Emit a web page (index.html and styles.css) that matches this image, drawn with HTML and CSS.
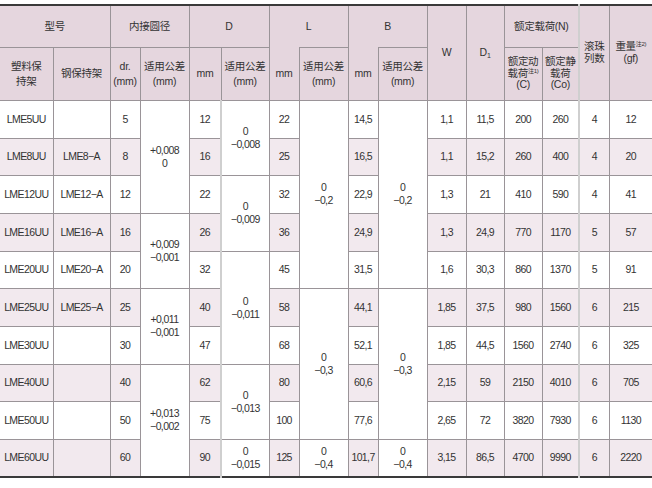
FILE: index.html
```html
<!DOCTYPE html>
<html lang="zh">
<head>
<meta charset="utf-8">
<title>LME 规格表</title>
<link rel="stylesheet" href="styles.css">
</head>
<body>
<table class="spec">
  <colgroup>
    <col style="width:53px"><col style="width:57px"><col style="width:30px"><col style="width:49px">
    <col style="width:32px"><col style="width:48px"><col style="width:30px"><col style="width:49px">
    <col style="width:30px"><col style="width:49px"><col style="width:39px"><col style="width:38px">
    <col style="width:38px"><col style="width:37px"><col style="width:30px"><col style="width:43px">
  </colgroup>
  <thead>
    <tr class="h1">
      <th colspan="2">型号</th>
      <th colspan="2">内接圆径</th>
      <th colspan="2">D</th>
      <th colspan="2" class="nob">L</th>
      <th colspan="2" class="nob">B</th>
      <th rowspan="2">W</th>
      <th rowspan="2">D<sub>1</sub></th>
      <th colspan="2">额定载荷(N)</th>
      <th rowspan="2" class="soft tight">滚珠<br>列数</th>
      <th rowspan="2" class="tight">重量<sup>注2)</sup><br>(gf)</th>
    </tr>
    <tr class="h2">
      <th>塑料保<br>持架</th>
      <th>钢保持架</th>
      <th>dr.<br>(mm)</th>
      <th>适用公差<br>(mm)</th>
      <th>mm</th>
      <th>适用公差<br>(mm)</th>
      <th>mm</th>
      <th class="bt">适用公差<br>(mm)</th>
      <th>mm</th>
      <th class="bt">适用公差<br>(mm)</th>
      <th class="tight">额定动<br>载荷<sup>注1)</sup><br>(C)</th>
      <th class="tight">额定静<br>载荷<br>(Co)</th>
    </tr>
  </thead>
  <tbody>
    <tr class="r38">
      <td>LME5UU</td><td></td><td>5</td>
      <td rowspan="3" class="m">+0,008<br>0</td>
      <td>12</td>
      <td rowspan="2" class="m soft">0<br>−0,008</td>
      <td>22</td>
      <td rowspan="5" class="m">0<br>−0,2</td>
      <td>14,5</td>
      <td rowspan="5" class="m">0<br>−0,2</td>
      <td>1,1</td><td>11,5</td><td>200</td><td>260</td><td class="soft">4</td><td>12</td>
    </tr>
    <tr class="alt r37">
      <td>LME8UU</td><td>LME8−A</td><td>8</td>
      <td>16</td><td>25</td><td>16,5</td>
      <td>1,1</td><td>15,2</td><td>260</td><td>400</td><td class="soft">4</td><td>20</td>
    </tr>
    <tr class="r38">
      <td>LME12UU</td><td>LME12−A</td><td>12</td>
      <td>22</td>
      <td rowspan="2" class="m soft">0<br>−0,009</td>
      <td>32</td><td>22,9</td>
      <td>1,3</td><td>21</td><td>410</td><td>590</td><td class="soft">4</td><td>41</td>
    </tr>
    <tr class="alt r38">
      <td>LME16UU</td><td>LME16−A</td><td>16</td>
      <td rowspan="2" class="m">+0,009<br>−0,001</td>
      <td>26</td><td>36</td><td>24,9</td>
      <td>1,3</td><td>24,9</td><td>770</td><td>1170</td><td class="soft">5</td><td>57</td>
    </tr>
    <tr class="r37">
      <td>LME20UU</td><td>LME20−A</td><td>20</td>
      <td>32</td>
      <td rowspan="3" class="m soft">0<br>−0,011</td>
      <td>45</td><td>31,5</td>
      <td>1,6</td><td>30,3</td><td>860</td><td>1370</td><td class="soft">5</td><td>91</td>
    </tr>
    <tr class="alt r38">
      <td>LME25UU</td><td>LME25−A</td><td>25</td>
      <td rowspan="2" class="m">+0,011<br>−0,001</td>
      <td>40</td><td>58</td>
      <td rowspan="4" class="m">0<br>−0,3</td>
      <td>44,1</td>
      <td rowspan="4" class="m">0<br>−0,3</td>
      <td>1,85</td><td>37,5</td><td>980</td><td>1560</td><td class="soft">6</td><td>215</td>
    </tr>
    <tr class="r38">
      <td>LME30UU</td><td></td><td>30</td>
      <td>47</td><td>68</td><td>52,1</td>
      <td>1,85</td><td>44,5</td><td>1560</td><td>2740</td><td class="soft">6</td><td>325</td>
    </tr>
    <tr class="alt r37">
      <td>LME40UU</td><td></td><td>40</td>
      <td rowspan="3" class="m">+0,013<br>−0,002</td>
      <td>62</td>
      <td rowspan="2" class="m soft">0<br>−0,013</td>
      <td>80</td><td>60,6</td>
      <td>2,15</td><td>59</td><td>2150</td><td>4010</td><td class="soft">6</td><td>705</td>
    </tr>
    <tr class="r38">
      <td>LME50UU</td><td></td><td>50</td>
      <td>75</td><td>100</td><td>77,6</td>
      <td>2,65</td><td>72</td><td>3820</td><td>7930</td><td class="soft">6</td><td>1130</td>
    </tr>
    <tr class="alt r38">
      <td>LME60UU</td><td></td><td>60</td>
      <td>90</td>
      <td class="m soft">0<br>−0,015</td>
      <td>125</td>
      <td class="m">0<br>−0,4</td>
      <td>101,7</td>
      <td class="m">0<br>−0,4</td>
      <td>3,15</td><td>86,5</td><td>4700</td><td>9990</td><td class="soft">6</td><td>2220</td>
    </tr>
  </tbody>
</table>
</body>
</html>
```
FILE: styles.css
```css
html, body {
  margin: 0;
  padding: 0;
  background: #ffffff;
}
body {
  padding-top: 4px;
  font-family: "Liberation Sans Narrow", "Arial Narrow", "Liberation Sans", "Noto Sans CJK SC", sans-serif;
  color: #333333;
}
.spec {
  width: 652px;
  table-layout: fixed;
  border-collapse: collapse;
  border-top: 2px solid #3a3a3a;
  border-bottom: 2px solid #3a3a3a;
  font-size: 10.5px;
  letter-spacing: -0.3px;
}
.spec th, .spec td {
  padding: 0;
  text-align: center;
  vertical-align: middle;
  border-right: 1px solid #9a9498;
  border-bottom: 1px solid #9a9498;
  line-height: 15px;
}
.spec th:last-child, .spec td:last-child {
  border-right: none;
}
.spec thead th {
  background: #e5d6de;
  font-weight: normal;
}
.spec thead th.tight {
  line-height: 11.5px;
}
.spec thead .nob {
  border-bottom: none;
}
.spec thead .bt {
  border-top: 1px solid #9a9498;
}
.spec tr.h1 { height: 42px; }
.spec tr.h2 { height: 53px; }
.spec tr.r38 { height: 38px; }
.spec tr.r37 { height: 37px; }
.spec tbody td {
  background: #ffffff;
  line-height: 13px;
  letter-spacing: -0.6px;
}
.spec tbody tr.alt td {
  background: #f2e9ee;
}
.spec tbody tr td.m {
  background: #ffffff;
}
.spec .soft {
  border-left: 2px solid #cfcfcf;
}
.spec sub {
  font-size: 7px;
  vertical-align: -2px;
  line-height: 0;
}
.spec sup {
  font-size: 6px;
  vertical-align: 4px;
  line-height: 0;
}
```
